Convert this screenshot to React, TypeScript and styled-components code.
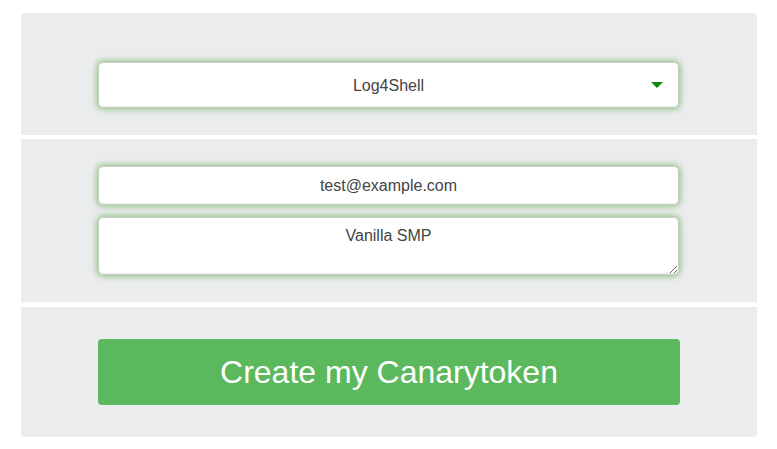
import React from "react";
import styled, { createGlobalStyle } from "styled-components";

const GlobalStyle = createGlobalStyle`
  * { box-sizing: border-box; }
  html, body { margin: 0; padding: 0; background: #ffffff; }
  body { font-family: "Liberation Sans", Helvetica, Arial, sans-serif; }
`;

const Page = styled.div`
  padding: 13px 20px 12px 21px;
`;

const Card = styled.form`
  width: 736px;
  display: flex;
  flex-direction: column;
  gap: 4px;
  border-radius: 4px;
  overflow: hidden;
`;

const Section = styled.div<{ $top: number; $bottom: number; $gap?: number; $offset?: number }>`
  background: #ebecee;
  padding: ${(p) => p.$top}px 77px ${(p) => p.$bottom}px;
  margin-top: ${(p) => p.$offset ?? 0}px;
  display: flex;
  flex-direction: column;
  gap: ${(p) => p.$gap ?? 0}px;
`;

const fieldStyle = `
  width: 581px;
  border: 1px solid #cccccc;
  border-radius: 5px;
  background: #ffffff;
  box-shadow: 0 0 6px 1px rgba(60, 160, 30, 0.6), inset 0 -1px 1px rgba(0, 0, 0, 0.08);
  font-family: "Liberation Sans", Helvetica, Arial, sans-serif;
  font-size: 16px;
  color: #444444;
  text-align: center;
  outline: none;
`;

const SelectWrap = styled.div`
  position: relative;
  width: 581px;
`;

const Select = styled.select`
  ${fieldStyle}
  height: 46px;
  appearance: none;
  -webkit-appearance: none;
  text-align-last: center;
  padding: 0 30px;
`;

const Arrow = styled.svg`
  position: absolute;
  right: 16px;
  top: 20px;
  pointer-events: none;
`;

const Input = styled.input`
  ${fieldStyle}
  height: 39px;
  padding: 0 10px;
`;

const TextArea = styled.textarea`
  ${fieldStyle}
  height: 58px;
  padding: 9px 10px;
  resize: vertical;
  line-height: 18px;
`;

const Button = styled.button`
  width: 582px;
  height: 66px;
  border: none;
  border-radius: 4px;
  background: #5cb85c;
  color: #ffffff;
  font-family: "Liberation Sans", Helvetica, Arial, sans-serif;
  font-size: 32px;
  cursor: pointer;
  padding: 0;
`;

export default function App() {
  return (
    <Page>
      <GlobalStyle />
      <Card onSubmit={(e) => e.preventDefault()}>
        <Section $top={49} $bottom={27}>
          <SelectWrap>
            <Select defaultValue="log4shell">
              <option value="log4shell">Log4Shell</option>
            </Select>
            <Arrow width="12" height="6" viewBox="0 0 12 6">
              <polygon points="0,0 12,0 6,6" fill="#0a8a0a" />
            </Arrow>
          </SelectWrap>
        </Section>
        <Section $top={27} $bottom={27} $gap={12}>
          <Input type="text" defaultValue="test@example.com" />
          <TextArea defaultValue="Vanilla SMP" />
        </Section>
        <Section $top={32} $bottom={32} $offset={1}>
          <Button type="submit">Create my Canarytoken</Button>
        </Section>
      </Card>
    </Page>
  );
}
